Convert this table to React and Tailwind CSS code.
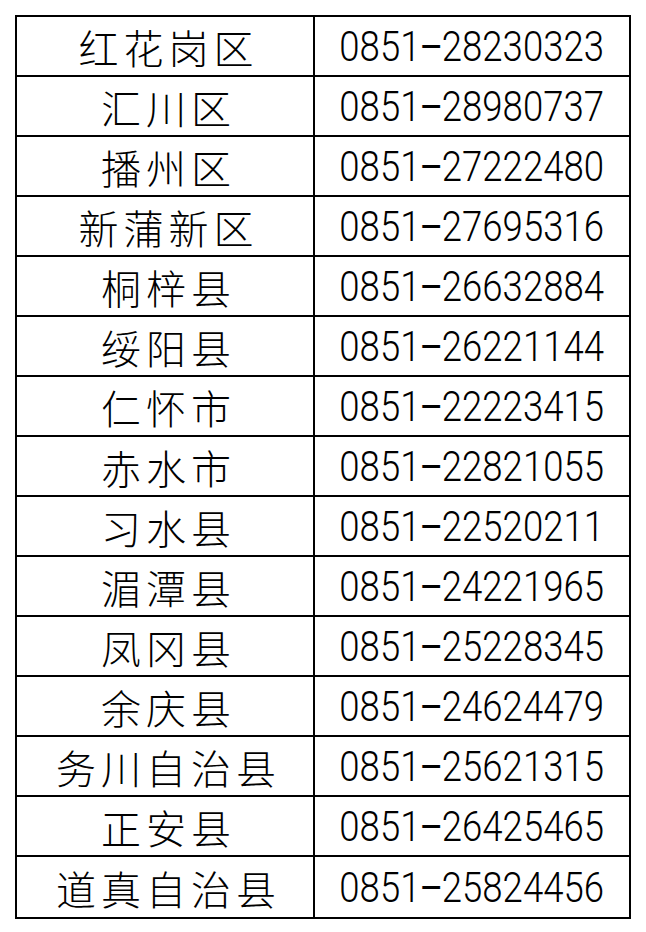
import React from "react";

const rows = [
  ["红花岗区", "28230323"],
  ["汇川区", "28980737"],
  ["播州区", "27222480"],
  ["新蒲新区", "27695316"],
  ["桐梓县", "26632884"],
  ["绥阳县", "26221144"],
  ["仁怀市", "22223415"],
  ["赤水市", "22821055"],
  ["习水县", "22520211"],
  ["湄潭县", "24221965"],
  ["凤冈县", "25228345"],
  ["余庆县", "24624479"],
  ["务川自治县", "25621315"],
  ["正安县", "26425465"],
  ["道真自治县", "25824456"],
];

export default function App() {
  return (
    <div className="w-[646px] h-[932px] bg-white pt-[15px] pl-[15px]">
      <div className="w-[616px] border-2 border-black flex flex-col">
        {rows.map(([name, phone], i) => (
          <div
            key={i}
            className={
              "flex h-[60px] " + (i < rows.length - 1 ? "border-b-2 border-black" : "")
            }
          >
            <div className="w-[298px] border-r-2 border-black flex items-center justify-center">
              <span
                className="text-[40px] leading-none tracking-[5px] pl-[7px] text-black mt-[2px] whitespace-nowrap"
                style={{ fontFamily: '"Noto Sans CJK SC", sans-serif', fontWeight: 300 }}
              >
                {name}
              </span>
            </div>
            <div className="flex-1 flex items-center justify-center">
              <span
                className="inline-block text-[43px] leading-none text-black scale-x-[0.85] whitespace-nowrap"
                style={{ fontFamily: 'Roboto, "Liberation Sans", sans-serif', fontWeight: 300 }}
              >
                0851
                <span
                  className="font-normal"
                  style={{ fontFamily: '"Liberation Sans", sans-serif', fontWeight: 400 }}
                >
                  −
                </span>
                {phone}
              </span>
            </div>
          </div>
        ))}
      </div>
    </div>
  );
}
